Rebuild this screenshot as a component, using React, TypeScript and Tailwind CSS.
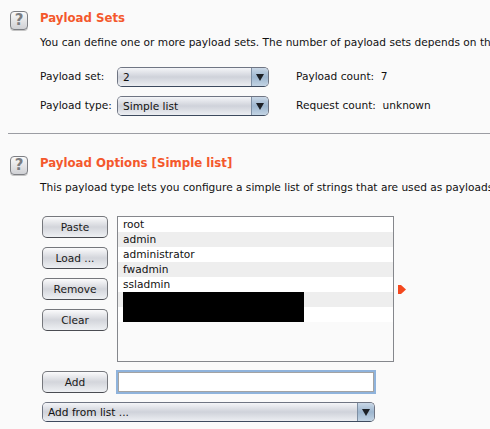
function HelpIcon() {
    return (
        <div className="w-[18px] h-[19px] shrink-0 rounded-[4px] border border-[#7d7f84] bg-gradient-to-b from-[#fafafa] to-[#d0d1d5] shadow-[0_1px_0_#c4c4c4] flex items-center justify-center text-[15px] font-bold leading-none text-[#7b7d81]">
            ?
        </div>
    );
}

function Select({ value, className }: { value: string; className: string }) {
    return (
        <div className={`h-5 flex rounded-[5px] border border-[#6f7583] border-b-[#3d4a5e] overflow-hidden ${className}`}>
            <div className="flex-1 pl-[5px] flex items-center leading-none bg-gradient-to-b from-[#f4f5f8] via-[#cfd2da] to-[#eceef2]">
                {value}
            </div>
            <div className="w-[17px] shrink-0 flex items-center justify-center border-l border-[#7e8fa3] bg-gradient-to-b from-[#c9d7e6] via-[#9db6cf] to-[#c3d4e4]">
                <svg width="8" height="7" viewBox="0 0 8 7">
                    <path d="M0 0h8L4 7z" fill="#1c2026" />
                </svg>
            </div>
        </div>
    );
}

function Button({ label }: { label: string }) {
    return (
        <div className="w-[66px] h-[22px] flex items-center justify-center rounded-[5px] border border-[#75777c] border-b-[#4a4c52] bg-gradient-to-b from-[#fbfbfc] via-[#d3d5db] to-[#eef0f3] leading-none text-[#1a1a1a]">
            {label}
        </div>
    );
}

const rows = ["root", "admin", "administrator", "fwadmin", "ssladmin"];

export default function App() {
    return (
        <div className="w-[490px] h-[429px] overflow-hidden bg-[#fafafa] text-[10.6px] text-[#111] font-['DejaVu_Sans',sans-serif]">
            <section className="flex pl-[10px] pt-[11px] h-[133px]">
                <HelpIcon />
                <div className="ml-3 flex-1 min-w-0">
                    <h2 className="-mt-[2px] text-[11.75px] font-bold leading-[18px] text-[#f4582c] whitespace-nowrap">Payload Sets</h2>
                    <p className="mt-2 leading-[14px] whitespace-nowrap">
                        You can define one or more payload sets. The number of payload sets depends on the attack type
                    </p>
                    <div className="mt-[18px] flex items-center h-5">
                        <span className="w-[77px]">Payload set:</span>
                        <Select value="2" className="w-[152px]" />
                        <span className="ml-[27px]">Payload count:&nbsp; 7</span>
                    </div>
                    <div className="mt-[9px] flex items-center h-5">
                        <span className="w-[77px]">Payload type:</span>
                        <Select value="Simple list" className="w-[152px]" />
                        <span className="ml-[27px]">Request count:&nbsp; unknown</span>
                    </div>
                </div>
            </section>

            <div className="ml-2 h-px bg-[#9b9da3]" />

            <section className="flex pl-[10px] pt-[22px]">
                <HelpIcon />
                <div className="ml-3 flex-1 min-w-0">
                    <h2 className="-mt-[2px] text-[11.75px] font-bold leading-[18px] text-[#f4582c] whitespace-nowrap">
                        Payload Options [Simple list]
                    </h2>
                    <p className="mt-2 leading-[14px] whitespace-nowrap">
                        This payload type lets you configure a simple list of strings that are used as payloads:
                    </p>
                </div>
            </section>

            <div className="pl-[42px] mt-[22px]">
                <div className="flex">
                    <div className="flex flex-col gap-[9px]">
                        <Button label="Paste" />
                        <Button label="Load ..." />
                        <Button label="Remove" />
                        <Button label="Clear" />
                    </div>
                    <div className="ml-[9px] w-[277px] h-[146px] border border-[#85878c]">
                        {rows.map((row, i) => (
                            <div key={row} className={`h-[15px] pl-[5px] leading-[14px] ${i % 2 ? "bg-[#eeeeee]" : "bg-white"}`}>
                                {row}
                            </div>
                        ))}
                        <div className="h-[15px] pl-[5px] bg-[#eeeeee]">
                            <div className="w-[181px] h-full bg-black" />
                        </div>
                        <div className="h-[15px] pl-[5px] bg-white">
                            <div className="w-[181px] h-full bg-black" />
                        </div>
                    </div>
                    <svg className="ml-1 mt-[69px]" width="8" height="9" viewBox="0 0 8 9">
                        <path d="M0 0h3l5 4.5L3 9H0z" fill="#f4481e" />
                    </svg>
                </div>

                <div className="mt-2 flex items-center">
                    <Button label="Add" />
                    <div className="ml-2 w-[260px] h-6 bg-white border-2 border-[#8fb3dc] shadow-[inset_0_0_0_1px_#a3a3a3]" />
                </div>

                <Select value="Add from list ..." className="mt-2 w-[333px]" />
            </div>
        </div>
    );
}
